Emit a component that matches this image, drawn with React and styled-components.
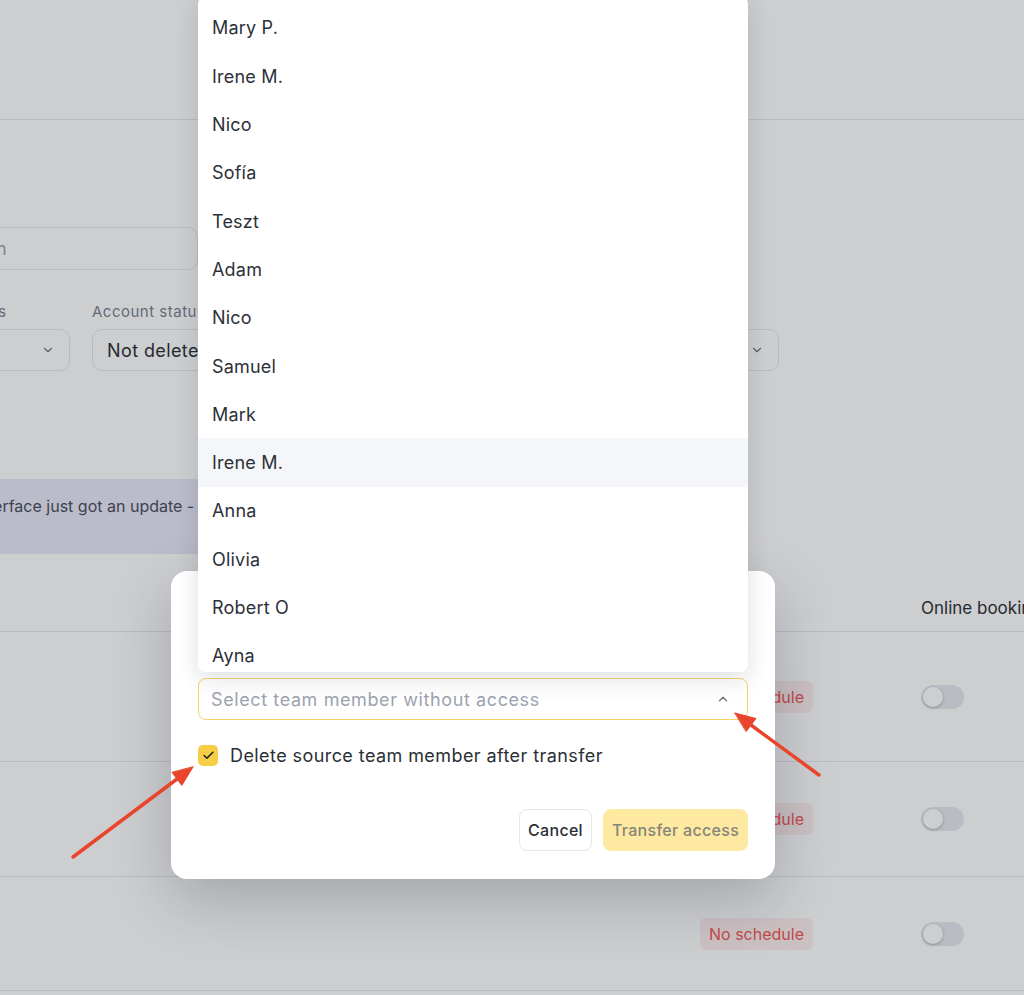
import React from 'react';
import styled, { createGlobalStyle } from 'styled-components';
import { ChevronDown, ChevronUp, Check, Search } from 'lucide-react';

const GlobalStyle = createGlobalStyle`
  * { box-sizing: border-box; }
  html, body { margin: 0; padding: 0; }
  body {
    font-family: Inter, "Noto Sans", sans-serif;
    color: #2b2f36;
    background: #fff;
  }
`;

const Screen = styled.div`
  position: relative;
  width: 1024px;
  height: 995px;
  overflow: hidden;
  background: #fff;
`;

// page behind the modal

const Page = styled.div`
  display: flex;
  flex-direction: column;
`;

const TopBar = styled.div`
  height: 120px;
  border-bottom: 1px solid #e5e7eb;
  flex-shrink: 0;
`;

const SearchBox = styled.div`
  margin: 107px 0 0 -100px;
  width: 298px;
  height: 43px;
  border: 1px solid #e5e7eb;
  border-radius: 10px;
  display: flex;
  align-items: center;
  gap: 12px;
  padding-left: 16px;
  color: #9ca3af;
  font-size: 18px;
`;

const FieldRow = styled.div`
  margin: 32px 0 0 -97px;
  display: flex;
  gap: 22px;
`;

const Field = styled.div`
  width: ${(p) => p.width}px;
  display: flex;
  flex-direction: column;
  gap: 7px;
`;

const FieldLabel = styled.div`
  font-size: 15px;
  line-height: 20px;
  letter-spacing: 0.5px;
  color: #7b8190;
  white-space: nowrap;
`;

const FilterSelect = styled.div`
  height: 42px;
  border: 1px solid #e5e7eb;
  border-radius: 10px;
  padding: 0 14px;
  display: flex;
  align-items: center;
  justify-content: space-between;
  font-size: 18px;
  letter-spacing: 0.4px;
  color: #2b2f36;
  white-space: nowrap;
  overflow: hidden;
`;

const Banner = styled.div`
  margin: 108px 0 0 -188px;
  width: 905px;
  height: 75px;
  background: #e9e8f8;
  padding: 16px 20px;
  font-size: 16px;
  line-height: 22px;
  color: #4a4e5c;
  white-space: nowrap;
`;

const Table = styled.div`
  margin-top: 30px;
  display: flex;
  flex-direction: column;
`;

const Row = styled.div`
  height: ${(p) => p.h}px;
  border-bottom: 1px solid #e5e7eb;
  display: grid;
  grid-template-columns: 700px 221px 1fr;
  align-items: center;
`;

const HeadCell = styled.div`
  font-size: 17px;
  color: #2b2f36;
  white-space: nowrap;
`;

const Badge = styled.span`
  display: inline-flex;
  align-items: center;
  height: 32px;
  padding: 0 9px;
  border-radius: 6px;
  background: #fdeeee;
  color: #f05858;
  font-size: 16px;
`;

const Toggle = styled.div`
  width: 43px;
  height: 24px;
  border-radius: 12px;
  background: #e6e8ee;
  padding: 2px;
  display: flex;
  align-items: center;
`;

const Knob = styled.div`
  width: 20px;
  height: 20px;
  border-radius: 50%;
  background: #fff;
  box-shadow: 0 1px 3px rgba(0, 0, 0, 0.25);
`;

// overlay + modal

const Overlay = styled.div`
  position: absolute;
  inset: 0;
  background: rgba(20, 25, 35, 0.21);
  padding: 571px 0 0 171px;
`;

const Modal = styled.div`
  width: 604px;
  height: 308px;
  background: #fff;
  border-radius: 16px;
  padding: 27px 27px 28px;
  box-shadow: 0 20px 60px rgba(15, 20, 35, 0.22);
  display: flex;
  flex-direction: column;
`;

const ModalTitle = styled.div`
  font-size: 20px;
  font-weight: 600;
  line-height: 28px;
  margin-bottom: 26px;
`;

const ModalLabel = styled.div`
  font-size: 15px;
  line-height: 20px;
  margin-bottom: 6px;
  color: #4b5563;
`;

const SelectBox = styled.div`
  position: relative;
  height: 42px;
  border: 1px solid #f4d46a;
  border-radius: 8px;
  padding: 0 17px 0 12px;
  display: flex;
  align-items: center;
  justify-content: space-between;
  font-size: 18px;
  letter-spacing: 0.6px;
  color: #9ca3af;
`;

const Menu = styled.div`
  position: absolute;
  left: -1px;
  right: -1px;
  bottom: calc(100% + 7px);
  height: 676px;
  background: #fff;
  border-radius: 8px;
  box-shadow: 0 6px 24px rgba(15, 20, 35, 0.14);
  overflow: hidden;
  padding-top: 7.8px;
  letter-spacing: 0.2px;
  z-index: 2;
`;

const MenuItem = styled.div`
  height: 48.3px;
  display: flex;
  align-items: center;
  padding-left: 14px;
  font-size: 18px;
  color: #2d3139;
  background: ${(p) => (p.active ? '#f5f6f9' : '#fff')};
`;

const CheckRow = styled.label`
  margin-top: 25px;
  display: flex;
  align-items: center;
  gap: 12px;
  font-size: 18px;
  letter-spacing: 0.42px;
  color: #2b2f36;
`;

const CheckBox = styled.span`
  width: 20px;
  height: 21px;
  border-radius: 5px;
  background: #f6cd45;
  display: flex;
  align-items: center;
  justify-content: center;
  color: #222;
`;

const Actions = styled.div`
  margin-top: 43px;
  display: flex;
  justify-content: flex-end;
  gap: 11px;
`;

const Button = styled.button`
  width: ${(p) => (p.primary ? 145 : 73)}px;
  height: 42px;
  padding: 0;
  border-radius: 8px;
  font-family: inherit;
  font-size: 16px;
  font-weight: 500;
  letter-spacing: 0.3px;
  border: 1px solid ${(p) => (p.primary ? '#fde9a0' : '#e5e7eb')};
  background: ${(p) => (p.primary ? '#fde9a0' : '#fff')};
  color: ${(p) => (p.primary ? '#86857c' : '#2b2f36')};
`;

const Arrows = styled.svg`
  position: absolute;
  inset: 0;
  pointer-events: none;
`;

const names = [
  'Mary P.', 'Irene M.', 'Nico', 'Sofía', 'Teszt', 'Adam', 'Nico',
  'Samuel', 'Mark', 'Irene M.', 'Anna', 'Olivia', 'Robert O', 'Ayna', 'Lucas',
];

const rows = [130, 115, 114, 115];

const App = () => (
  <Screen>
    <GlobalStyle />
    <Page>
      <TopBar />
      <SearchBox>
        <Search size={18} />
        Search
      </SearchBox>
      <FieldRow>
        <Field width={167}>
          <FieldLabel>Access levels</FieldLabel>
          <FilterSelect>
            All
            <ChevronDown size={14} color="#6b7280" />
          </FilterSelect>
        </Field>
        <Field width={220}>
          <FieldLabel>Account status</FieldLabel>
          <FilterSelect>
            Not deleted
            <ChevronDown size={14} color="#6b7280" />
          </FilterSelect>
        </Field>
        <Field width={220}>
          <FieldLabel>Location</FieldLabel>
          <FilterSelect>
            All locations
            <ChevronDown size={14} color="#6b7280" />
          </FilterSelect>
        </Field>
        <Field width={203}>
          <FieldLabel>Schedule</FieldLabel>
          <FilterSelect>
            All
            <ChevronDown size={14} color="#6b7280" />
          </FilterSelect>
        </Field>
      </FieldRow>
      <Banner>The team member interface just got an update - check out what's new.</Banner>
      <Table>
        <Row h={48}>
          <div />
          <HeadCell>Schedule</HeadCell>
          <HeadCell>Online booking</HeadCell>
        </Row>
        {rows.map((h, i) => (
          <Row key={i} h={h}>
            <div />
            <div>
              <Badge>No schedule</Badge>
            </div>
            <Toggle>
              <Knob />
            </Toggle>
          </Row>
        ))}
      </Table>
    </Page>

    <Overlay>
      <Modal>
        <ModalTitle>Transfer access</ModalTitle>
        <ModalLabel>Team member without access</ModalLabel>
        <SelectBox>
          Select team member without access
          <ChevronUp size={14} color="#6b7280" strokeWidth={2.2} />
          <Menu>
            {names.map((n, i) => (
              <MenuItem key={i} active={i === 9}>{n}</MenuItem>
            ))}
          </Menu>
        </SelectBox>
        <CheckRow>
          <CheckBox>
            <Check size={13} strokeWidth={3} />
          </CheckBox>
          Delete source team member after transfer
        </CheckRow>
        <Actions>
          <Button>Cancel</Button>
          <Button primary>Transfer access</Button>
        </Actions>
      </Modal>
    </Overlay>

    <Arrows width="1024" height="995" viewBox="0 0 1024 995">
      <g stroke="#e8452c" strokeWidth="3.5" strokeLinecap="round" fill="#e8452c">
        <line x1="819" y1="775" x2="751" y2="725" />
        <polygon points="735,713 756,718.5 746.3,731.3" strokeWidth="1" strokeLinejoin="round" />
        <line x1="73" y1="857" x2="177" y2="779" />
        <polygon points="193,767 181.8,785.4 172.2,772.6" strokeWidth="1" strokeLinejoin="round" />
      </g>
    </Arrows>
  </Screen>
);

export default App;
